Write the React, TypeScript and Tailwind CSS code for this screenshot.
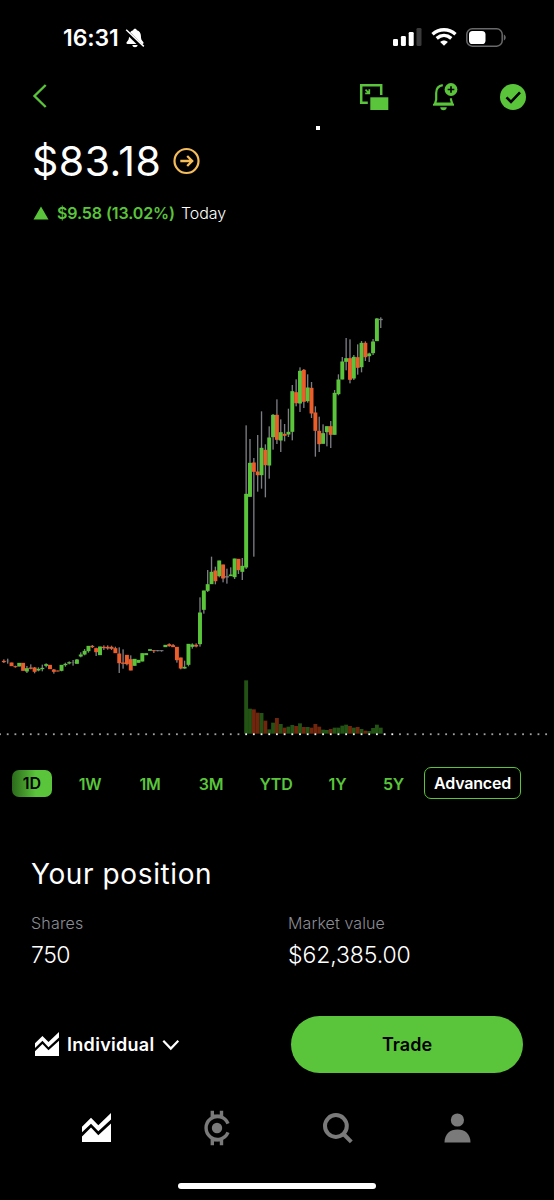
type Tone = 'up' | 'down' | 'flat';
type Candle = [tone: Tone, high: number, top: number, bottom: number, low: number];

const TONES: Record<Tone, string> = {
  up: '#5ac53b',
  down: '#eb5d2a',
  flat: '#7c7c83',
};

// One entry per 5 minute candle, in chart units (3 units per pixel).
const CANDLES: Candle[] = [
  ['down', 1078, 1083, 1086, 1089],
  ['flat', 1076, 1083, 1083, 1091],
  ['down', 1088, 1088, 1098, 1098],
  ['down', 1097, 1099, 1101, 1103],
  ['up', 1089, 1089, 1099, 1099],
  ['down', 1089, 1089, 1112, 1112],
  ['up', 1098, 1105, 1114, 1119],
  ['down', 1093, 1103, 1106, 1108],
  ['down', 1101, 1103, 1115, 1120],
  ['up', 1102, 1107, 1111, 1114],
  ['up', 1094, 1104, 1107, 1114],
  ['up', 1090, 1093, 1097, 1102],
  ['down', 1095, 1095, 1107, 1107],
  ['down', 1107, 1109, 1115, 1121],
  ['down', 1112, 1112, 1114, 1114],
  ['up', 1095, 1095, 1112, 1114],
  ['up', 1088, 1092, 1095, 1100],
  ['up', 1084, 1087, 1090, 1093],
  ['flat', 1080, 1088, 1088, 1097],
  ['up', 1077, 1079, 1091, 1091],
  ['up', 1057, 1064, 1069, 1072],
  ['up', 1047, 1053, 1063, 1066],
  ['up', 1038, 1038, 1053, 1058],
  ['down', 1035, 1038, 1041, 1044],
  ['down', 1043, 1045, 1056, 1068],
  ['up', 1040, 1040, 1065, 1065],
  ['down', 1036, 1041, 1044, 1050],
  ['down', 1036, 1041, 1045, 1049],
  ['down', 1037, 1041, 1046, 1050],
  ['down', 1040, 1045, 1059, 1059],
  ['down', 1042, 1061, 1089, 1119],
  ['down', 1048, 1088, 1091, 1106],
  ['down', 1065, 1065, 1092, 1096],
  ['down', 1066, 1078, 1111, 1111],
  ['up', 1077, 1077, 1097, 1097],
  ['up', 1080, 1080, 1088, 1088],
  ['up', 1060, 1060, 1084, 1084],
  ['up', 1060, 1060, 1065, 1065],
  ['up', 1048, 1048, 1052, 1052],
  ['down', 1050, 1051, 1053, 1059],
  ['flat', 1050, 1051, 1053, 1054],
  ['flat', 1051, 1051, 1053, 1055],
  ['up', 1035, 1035, 1041, 1041],
  ['down', 1030, 1033, 1038, 1040],
  ['down', 1032, 1036, 1041, 1041],
  ['down', 1041, 1041, 1080, 1088],
  ['down', 1073, 1073, 1105, 1108],
  ['up', 1082, 1101, 1105, 1106],
  ['up', 1032, 1032, 1094, 1099],
  ['up', 1030, 1034, 1040, 1046],
  ['down', 1030, 1035, 1039, 1042],
  ['up', 892, 938, 1032, 1040],
  ['up', 872, 872, 929, 941],
  ['up', 810, 853, 872, 876],
  ['up', 770, 816, 852, 852],
  ['down', 800, 812, 843, 853],
  ['up', 782, 782, 828, 832],
  ['down', 794, 794, 835, 847],
  ['flat', 806, 829, 832, 851],
  ['up', 802, 824, 828, 828],
  ['up', 776, 776, 831, 837],
  ['down', 777, 777, 810, 822],
  ['up', 774, 798, 815, 840],
  ['up', 376, 582, 802, 807],
  ['up', 417, 489, 590, 590],
  ['down', 474, 488, 515, 770],
  ['down', 405, 515, 525, 575],
  ['up', 334, 444, 525, 566],
  ['down', 433, 450, 495, 592],
  ['up', 379, 413, 496, 536],
  ['up', 342, 345, 411, 449],
  ['down', 298, 345, 419, 432],
  ['up', 358, 397, 421, 456],
  ['down', 372, 402, 407, 424],
  ['up', 326, 396, 403, 411],
  ['up', 255, 274, 395, 421],
  ['down', 238, 277, 309, 319],
  ['up', 202, 213, 310, 336],
  ['down', 207, 210, 305, 324],
  ['up', 223, 263, 303, 308],
  ['down', 246, 264, 340, 354],
  ['down', 319, 338, 392, 470],
  ['down', 350, 393, 432, 456],
  ['up', 373, 400, 431, 431],
  ['up', 379, 379, 396, 439],
  ['down', 363, 379, 404, 444],
  ['up', 270, 279, 404, 404],
  ['up', 223, 239, 282, 286],
  ['up', 171, 185, 238, 238],
  ['up', 114, 175, 185, 211],
  ['down', 118, 175, 239, 250],
  ['up', 165, 171, 235, 240],
  ['down', 133, 172, 203, 224],
  ['up', 123, 129, 201, 217],
  ['down', 124, 129, 171, 183],
  ['up', 158, 161, 168, 186],
  ['up', 117, 125, 159, 165],
  ['up', 54, 56, 123, 123],
  ['flat', 52, 57, 60, 84],
];

// Volume only exists from the market open onwards.
const MARKET_OPEN = 63;
const VOLUME = [
  160, 75, 73, 63, 62, 39, 13, 33, 47, 29, 18, 21, 26, 23, 31, 20, 20, 18, 29, 21, 12, 11, 14, 18,
  18, 24, 27, 23, 18, 20, 14, 9, 8, 17, 27, 18,
];

const STEP = 11.538;
const BASELINE = 1301;

const RANGES = [
  { label: '1W', width: 'w-[60px]' },
  { label: '1M', width: 'w-[60px]' },
  { label: '3M', width: 'w-[62px]' },
  { label: 'YTD', width: 'w-[68px]' },
  { label: '1Y', width: 'w-[55px]' },
  { label: '5Y', width: 'w-[57px]' },
];

function StatusBar() {
  return (
    <div className="flex h-[74px] items-center justify-between pl-[63px] pr-[48px]">
      <div className="flex items-center gap-[6px]">
        <span className="mt-[2px] text-[23px] font-semibold leading-none tracking-[-0.1px]">16:31</span>
        <svg width="20" height="20" viewBox="0 0 20 20" className="mt-[1px]" fill="none">
          <path
            d="M10 .8c-1 0-1.700.6-1.900 1.500C5.600 3 4.100 5.200 4.100 7.800c0 3.600-.9 4.800-2.300 6.100-.8.900-.4 2 .8 2h14.800c1.200 0 1.600-1.100.8-2-1.400-1.300-2.300-2.500-2.300-6.100 0-2.600-1.500-4.800-4-5.500C11.700 1.400 11 .8 10 .8z"
            fill="#fff"
          />
          <path d="M7.300 17.100h5.400c-.3 1.400-1.300 2.200-2.700 2.200s-2.400-.8-2.700-2.200z" fill="#fff" />
          <path d="M.6 2.600 18 19.600" stroke="#000" strokeWidth="4" />
          <path d="M1.200 1.800 18.800 18.400" stroke="#fff" strokeWidth="1.500" />
        </svg>
      </div>
      <div className="flex items-center">
        <svg width="29" height="18" viewBox="0 0 29 18" className="mr-[9px]" fill="#fff">
          <rect x="0" y="11" width="5" height="7" rx="1.300" />
          <rect x="7.900" y="8" width="5" height="10" rx="1.300" />
          <rect x="15.700" y="4" width="5" height="14" rx="1.300" />
          <rect x="23.500" y="0" width="5" height="18" rx="1.300" fill="#3a3a3c" />
        </svg>
        <svg width="26" height="18" viewBox="0 0 26 18" className="mr-[9px]" fill="none" stroke="#fff">
          <path d="M1.500 6.200C8.200.3 17.800.3 24.500 6.200" strokeWidth="3.400" />
          <path d="M5.700 10.400c4.400-3.800 10.200-3.800 14.600 0" strokeWidth="3.400" />
          <path d="M9.200 13.900c2.200-2 5.400-2 7.600 0L13 17.700z" fill="#fff" stroke="none" />
        </svg>
        <svg width="40" height="19" viewBox="0 0 40 19" fill="none">
          <rect x=".8" y=".8" width="35.400" height="17.400" rx="5.500" stroke="#69696c" strokeWidth="1.500" />
          <rect x="3" y="3" width="16.500" height="13" rx="3.600" fill="#fff" />
          <path d="M37.800 6.500c1.200.5 1.900 1.600 1.900 3s-.7 2.500-1.900 3z" fill="#69696c" />
        </svg>
      </div>
    </div>
  );
}

function Toolbar() {
  return (
    <div className="flex h-[46px] items-center justify-between pl-[32px] pr-[27px]">
      <svg width="16" height="26" viewBox="0 0 16 26" className="mb-[2px]" fill="none" stroke="#5ac53b" strokeWidth="2.400">
        <path d="M13.700 2 2.500 13l11.200 11" />
      </svg>
      <div className="flex items-center">
        <svg width="30" height="28" viewBox="0 0 30 28" fill="none">
          <path d="M22.200 12V2.300H2.200v17.400h6.600" stroke="#5ac53b" strokeWidth="2.500" />
          <path d="m6.500 6.700 3.300 3.300M10.300 6.300v4.100H6.200" stroke="#5ac53b" strokeWidth="1.700" />
          <path d="M11.300 14.300h18V27h-18z" fill="#5ac53b" />
        </svg>
        <svg width="27" height="30" viewBox="0 0 27 30" className="mb-[2px] ml-[43px]" fill="none">
          <path
            d="M10.800 4.200C6.500 4.900 4.200 8 4.200 12v6.500l-1.200 4.200h17.200l-1.200-4v-1.400"
            stroke="#5ac53b"
            strokeWidth="2.200"
          />
          <path d="M1 23.700h21" stroke="#5ac53b" strokeWidth="2" />
          <path d="M8.200 26.200h6.600c-.2 1.700-1.400 3-3.300 3s-3.100-1.300-3.300-3z" fill="#5ac53b" />
          <circle cx="19" cy="8.500" r="6.400" fill="#5ac53b" />
          <path d="M19 5.200v6.600M15.700 8.500h6.600" stroke="#000" strokeWidth="1.600" />
        </svg>
        <svg width="28" height="28" viewBox="0 0 28 28" className="ml-[40px]" fill="none">
          <circle cx="14" cy="14" r="13" fill="#5ac53b" />
          <path d="m7.500 14.300 4.500 4.500L21 9.300" stroke="#000" strokeWidth="2.600" />
        </svg>
      </div>
    </div>
  );
}

function PriceHeader() {
  return (
    <div className="pl-[32px]">
      <div className="flex h-[50px] items-center">
        <span className="w-[141px] text-[41px] leading-none tracking-[0.5px]">$83.18</span>
        <svg width="28" height="28" viewBox="0 0 28 28" fill="none" stroke="#f5bd5a" strokeWidth="2.200">
          <circle cx="13.500" cy="14" r="12" />
          <path d="M7.300 14h11.400M14.200 9l5 5-5 5" strokeWidth="2.300" />
        </svg>
      </div>
      <div className="mt-[15px] flex h-[24px] items-center text-[16px] leading-none">
        <svg width="16" height="14" viewBox="0 0 16 14" className="mr-[8px] ml-[1px]">
          <path d="M8 .5 15.500 13.500H.5z" fill="#5ac53b" />
        </svg>
        <span className="w-[124px] font-semibold tracking-[-0.1px] text-[#5ac53b]">$9.58 (13.02%)</span>
        <span className="tracking-[-0.1px] font-light">Today</span>
      </div>
    </div>
  );
}

function PriceChart() {
  return (
    <svg width="554" height="450" viewBox="0 0 1662 1350" className="block">
      {VOLUME.map((size, i) => {
        const index = MARKET_OPEN + i;
        const up = CANDLES[index][0] !== 'down';
        return (
          <rect
            key={index}
            x={(index + 1) * STEP - 5.8}
            y={BASELINE - size}
            width={11.6}
            height={size}
            fill={up ? '#225214' : '#6f260d'}
          />
        );
      })}
      {CANDLES.map(([tone, high, top, bottom, low], i) => {
        const x = (i + 1) * STEP;
        return (
          <g key={i}>
            <rect x={x - 2} y={high} width={4} height={low - high} fill={TONES.flat} />
            <rect x={x - 5.9} y={top - 0.5} width={11.8} height={bottom - top + 1} fill={TONES[tone]} />
          </g>
        );
      })}
      {Array.from({ length: 72 }, (_, i) => (
        <rect
          key={i}
          x={i * STEP * 2 - 2.7}
          y={BASELINE - 1}
          width={5.4}
          height={5.4}
          fill={i > 31 && i < 52 ? '#fff' : '#a3a3a3'}
        />
      ))}
    </svg>
  );
}

function RangeTabs() {
  return (
    <div className="flex h-[32px] items-center pl-[12px] text-[16px] font-semibold text-[#5ac53b]">
      <button className="mr-[8px] h-[27px] w-[40px] rounded-[7px] bg-linear-to-r from-[#2c6a1b] to-[#5ac53b] to-60% text-black">
        1D
      </button>
      {RANGES.map(({ label, width }) => (
        <button key={label} className={`${width} pt-px text-center tracking-[-0.2px]`}>
          {label}
        </button>
      ))}
      <button className="ml-[2px] h-[32px] w-[97px] rounded-[7px] border-[1.5px] border-[#5ac53b] tracking-[-0.2px] text-white">
        Advanced
      </button>
    </div>
  );
}

function Position() {
  return (
    <section className="pl-[31px]">
      <h2 className="text-[28px] leading-[36px] tracking-[0.6px]">Your position</h2>
      <div className="mt-[20px] grid grid-cols-[257px_1fr]">
        <div>
          <div className="text-[16px] font-light leading-[22px] tracking-[0.2px] text-[#8d8d95]">Shares</div>
          <div className="mt-[6px] text-[23px] font-light leading-[30px] tracking-[-0.5px]">750</div>
        </div>
        <div>
          <div className="text-[16px] font-light leading-[22px] tracking-[0.1px] text-[#8d8d95]">Market value</div>
          <div className="mt-[6px] text-[23px] font-light leading-[30px] tracking-[-0.1px]">$62,385.00</div>
        </div>
      </div>
    </section>
  );
}

function InvestingIcon({ size }: { size: number }) {
  return (
    <svg width={size} height={size} viewBox="0 0 29 29" fill="#fff">
      <path d="M0 13.700 9 4.700l7.300 7.500L29 0v6.500L16.300 18.300 9 10.700 0 19.200z" />
      <path d="M0 23.400 9 14.600l7.300 7.600L29 10.600V29H0z" />
    </svg>
  );
}

function TradeBar() {
  return (
    <div className="flex h-[57px] items-center pl-[35px] pr-[31px]">
      <div className="mb-[2px]">
        <InvestingIcon size={24} />
      </div>
      <span className="ml-[8px] text-[18px] font-semibold tracking-[0.3px]">Individual</span>
      <svg width="18" height="12" viewBox="0 0 18 12" className="ml-[7px]" fill="none" stroke="#fff" strokeWidth="2.200">
        <path d="m1.300 1.800 7.500 7.800 7.500-7.800" />
      </svg>
      <button className="ml-auto h-[57px] w-[232px] rounded-full bg-[#5ac53b] text-[18px] font-semibold text-black">
        Trade
      </button>
    </div>
  );
}

function TabBar() {
  return (
    <nav className="flex h-[40px] items-center pl-[82px]">
      <div className="mb-[2px]">
        <InvestingIcon size={29} />
      </div>
      <svg width="28" height="36" viewBox="0 0 28 36" className="ml-[92px]" fill="none" stroke="#7a7a7a">
        <path d="M25 13.600A11.400 11.400 0 1 0 25 22.400" strokeWidth="3.400" />
        <path d="M9.300.8v6.500M18.500.8v6.500M9.300 28.700v6.500M18.500 28.700v6.500" strokeWidth="3.400" />
        <path d="M9 5.600h10M9 30.400h10" strokeWidth="2" />
        <circle cx="14" cy="18" r="5.200" fill="#7a7a7a" stroke="none" />
      </svg>
      <svg width="31" height="32" viewBox="0 0 31 32" className="mb-[1px] ml-[91px]" fill="none" stroke="#7a7a7a">
        <circle cx="13.900" cy="14" r="10.900" strokeWidth="4" />
        <path d="m21 21.500 8.300 8.300" strokeWidth="4" />
      </svg>
      <svg width="27" height="30" viewBox="0 0 27 30" className="mb-[1px] ml-[91px]" fill="#7a7a7a">
        <circle cx="13.400" cy="7" r="6.600" />
        <path d="M.5 29.500C.5 21 6 16.500 13.500 16.500S26.500 21 26.500 29.500z" />
      </svg>
    </nav>
  );
}

export default function App() {
  return (
    <div className="flex h-[1200px] w-[554px] flex-col overflow-hidden bg-black font-['Inter','Liberation_Sans',sans-serif] text-white">
      <StatusBar />
      <Toolbar />
      <div className="ml-[316px] mt-[6px] h-[4px] w-[4px] bg-white" />
      <div className="mt-[6px]">
        <PriceHeader />
      </div>
      <div className="mt-[75px]">
        <PriceChart />
      </div>
      <div className="mt-[17px]">
        <RangeTabs />
      </div>
      <div className="mt-[57px]">
        <Position />
      </div>
      <div className="mt-[46px]">
        <TradeBar />
      </div>
      <div className="mt-[35px]">
        <TabBar />
      </div>
      <div className="mx-auto mt-[35px] h-[6px] w-[198px] rounded-full bg-white" />
    </div>
  );
}
